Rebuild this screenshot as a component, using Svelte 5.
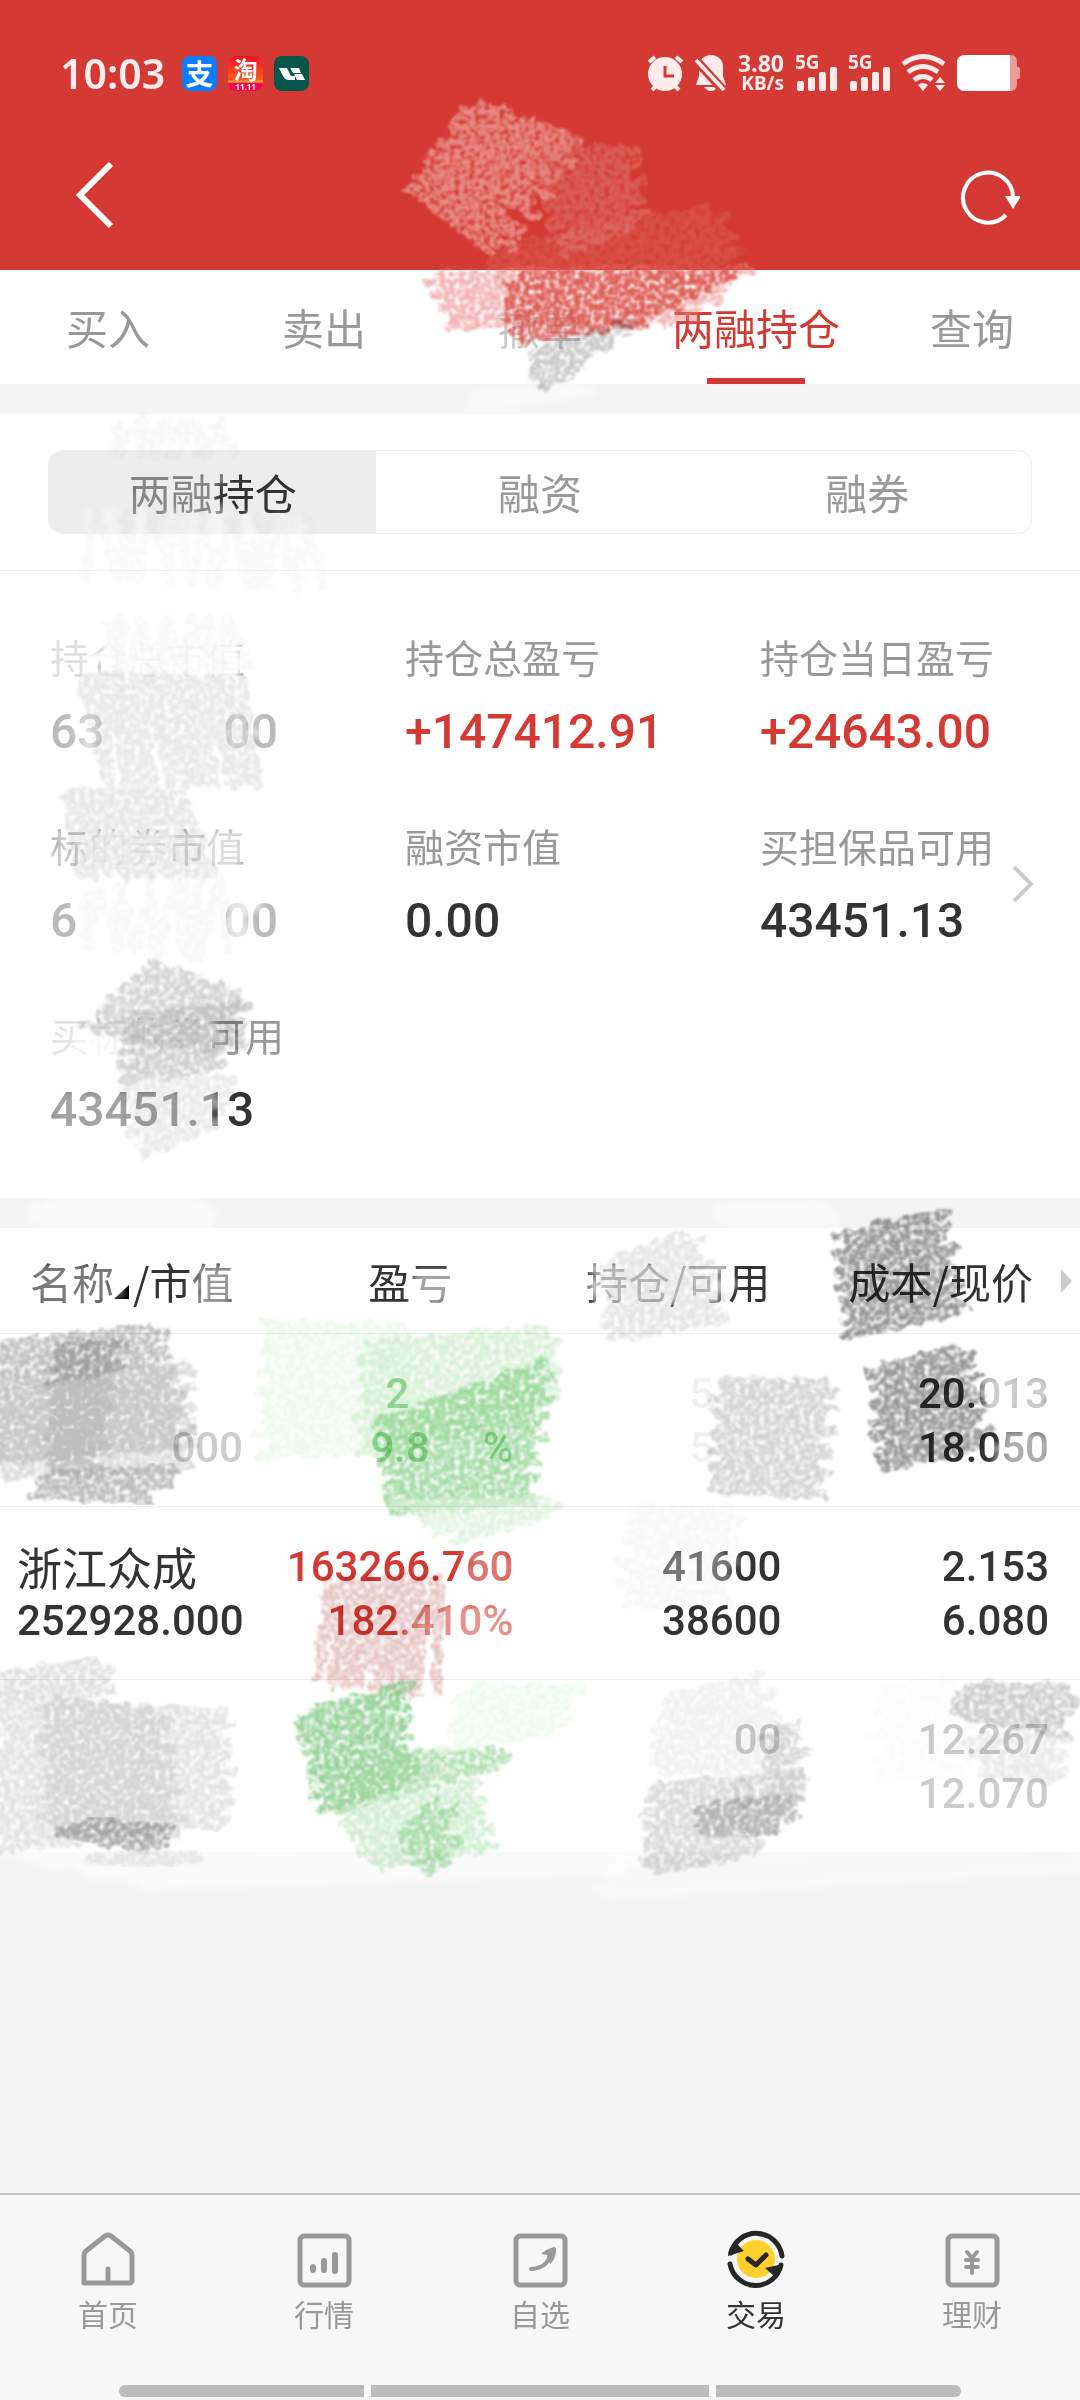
<script lang="ts">
	type Point = [number, number];

	interface Stroke {
		at: [Point, Point, Point, Point];
		rows: number;
		color: string;
		opacity: number;
	}

	interface Line {
		parts: string[];
		tone?: 'up' | 'down' | 'faint' | 'ghost' | 'name';
		span?: number;
	}

	const tabs = ['买入', '卖出', '撤单', '两融持仓', '查询'];
	const segments = ['两融持仓', '融资', '融券'];
	const nav = ['首页', '行情', '自选', '交易', '理财'];

	let activeTab = $state('两融持仓');
	let activeSegment = $state('两融持仓');

	const stats = [
		{ label: '持仓总市值', parts: ['63', '00'], tone: 'worn' },
		{ label: '持仓总盈亏', parts: ['+147412.91'], tone: 'up' },
		{ label: '持仓当日盈亏', parts: ['+24643.00'], tone: 'up' },
		{ label: '标的券市值', parts: ['6', '00'], tone: 'worn' },
		{ label: '融资市值', parts: ['0.00'], tone: '' },
		{ label: '买担保品可用', parts: ['43451.13'], tone: '' },
		{ label: '买标的券可用', parts: ['43451.13'], tone: '' }
	];

	const holdings: Line[][][] = [
		[
			[{ parts: [''] }, { parts: ['', '000'], tone: 'faint', span: 226 }],
			[{ parts: ['2', ''], tone: 'down', span: 128 }, { parts: ['9.8', '%'], tone: 'down', span: 143 }],
			[{ parts: ['5', ''], tone: 'ghost', span: 92 }, { parts: ['5', ''], tone: 'ghost', span: 92 }],
			[{ parts: ['20.013'] }, { parts: ['18.050'] }]
		],
		[
			[{ parts: ['浙江众成'], tone: 'name' }, { parts: ['252928.000'] }],
			[{ parts: ['163266.760'], tone: 'up' }, { parts: ['182.410%'], tone: 'up' }],
			[{ parts: ['41600'] }, { parts: ['38600'] }],
			[{ parts: ['2.153'] }, { parts: ['6.080'] }]
		],
		[
			[{ parts: [''] }, { parts: [''] }],
			[{ parts: [''] }, { parts: [''] }],
			[{ parts: ['00'], tone: 'faint' }, { parts: ['0', ''], tone: 'ghost', span: 50 }],
			[{ parts: ['12.267'], tone: 'faint' }, { parts: ['12.070'], tone: 'faint' }]
		]
	];

	// soft wipes that hide what is below them
	const wipes: Stroke[] = [
		{ at: [[495, 305], [575, 300], [590, 345], [495, 350]], rows: 4, color: '#fff', opacity: 0.5 },
		{ at: [[475, 395], [575, 388], [585, 392], [475, 408]], rows: 3, color: '#fff', opacity: 0.4 },
		{ at: [[130, 478], [215, 478], [215, 520], [130, 520]], rows: 4, color: '#ededed', opacity: 0.45 },
		{ at: [[88, 510], [90, 585], [318, 590], [300, 520]], rows: 14, color: '#fff', opacity: 0.4 },
		{ at: [[45, 640], [95, 640], [95, 675], [45, 675]], rows: 4, color: '#fff', opacity: 0.7 },
		{ at: [[100, 640], [245, 640], [245, 675], [100, 675]], rows: 4, color: '#fff', opacity: 0.95 },
		{ at: [[55, 835], [100, 835], [100, 865], [55, 865]], rows: 3, color: '#fff', opacity: 0.5 },
		{ at: [[90, 835], [165, 835], [165, 865], [90, 865]], rows: 4, color: '#fff', opacity: 0.9 },
		{ at: [[170, 835], [245, 835], [245, 865], [170, 865]], rows: 4, color: '#fff', opacity: 0.65 },
		{ at: [[82, 715], [100, 715], [100, 750], [82, 750]], rows: 4, color: '#fff', opacity: 0.5 },
		{ at: [[225, 715], [250, 715], [250, 750], [225, 750]], rows: 4, color: '#fff', opacity: 0.5 },
		{ at: [[225, 905], [248, 905], [248, 940], [225, 940]], rows: 3, color: '#fff', opacity: 0.65 },
		{ at: [[50, 1022], [90, 1022], [90, 1055], [50, 1055]], rows: 4, color: '#fff', opacity: 0.75 },
		{ at: [[85, 1022], [215, 1022], [215, 1055], [85, 1055]], rows: 4, color: '#fff', opacity: 0.9 },
		{ at: [[50, 1095], [215, 1095], [215, 1132], [50, 1132]], rows: 4, color: '#fff', opacity: 0.55 },
		{ at: [[40, 1204], [205, 1204], [205, 1224], [40, 1224]], rows: 4, color: '#fff', opacity: 0.6 },
		{ at: [[725, 1204], [825, 1204], [830, 1224], [725, 1224]], rows: 4, color: '#fff', opacity: 0.45 },
		{ at: [[35, 1270], [110, 1270], [110, 1300], [35, 1300]], rows: 4, color: '#fff', opacity: 0.35 },
		{ at: [[200, 1270], [235, 1270], [235, 1300], [200, 1300]], rows: 4, color: '#fff', opacity: 0.5 },
		{ at: [[418, 1275], [450, 1275], [450, 1300], [418, 1300]], rows: 4, color: '#fff', opacity: 0.55 },
		{ at: [[595, 1268], [722, 1268], [722, 1300], [595, 1300]], rows: 4, color: '#fff', opacity: 0.7 },
		{ at: [[985, 1380], [1050, 1380], [1050, 1408], [985, 1408]], rows: 4, color: '#fff', opacity: 0.75 },
		{ at: [[1005, 1436], [1050, 1436], [1050, 1462], [1005, 1462]], rows: 4, color: '#fff', opacity: 0.6 },
		{ at: [[470, 1555], [512, 1555], [512, 1580], [470, 1580]], rows: 3, color: '#fff', opacity: 0.3 },
		{ at: [[410, 1610], [512, 1610], [512, 1635], [410, 1635]], rows: 4, color: '#fff', opacity: 0.45 },
		{ at: [[665, 1555], [730, 1555], [725, 1580], [665, 1580]], rows: 4, color: '#fff', opacity: 0.35 },
		{ at: [[0, 1852], [640, 1848], [620, 1868], [150, 1885]], rows: 6, color: '#fff', opacity: 0.6 },
		{ at: [[620, 1856], [1080, 1850], [1080, 1868], [600, 1895]], rows: 6, color: '#fff', opacity: 0.35 }
	];

	// chalk on the red bar, lighter than its ground
	const chalk: Stroke[] = [
		{ at: [[474, 105], [578, 135], [500, 255], [412, 192]], rows: 18, color: '#eea5a1', opacity: 0.75 },
		{ at: [[540, 150], [628, 150], [640, 225], [560, 252]], rows: 12, color: '#e07a75', opacity: 0.6 },
		{ at: [[500, 250], [715, 210], [735, 258], [500, 270]], rows: 7, color: '#e07a75', opacity: 0.35 },
		{ at: [[430, 276], [742, 270], [690, 318], [455, 325]], rows: 8, color: '#e8827d', opacity: 0.6 },
		{ at: [[510, 276], [735, 272], [640, 322], [520, 338]], rows: 9, color: '#d8443d', opacity: 0.75 }
	];

	// pencil that darkens the page
	const pencil: Stroke[] = [
		{ at: [[535, 350], [632, 322], [550, 382], [545, 386]], rows: 8, color: '#c4c4c4', opacity: 0.9 },
		{ at: [[125, 418], [124, 455], [226, 455], [225, 425]], rows: 9, color: '#f4f4f4', opacity: 0.8 },
		{ at: [[90, 510], [95, 575], [322, 592], [300, 520]], rows: 14, color: '#f6f6f6', opacity: 0.7 },
		{ at: [[110, 620], [120, 690], [240, 670], [235, 620]], rows: 10, color: '#f4f4f4', opacity: 0.7 },
		{ at: [[85, 675], [100, 780], [258, 785], [235, 680]], rows: 20, color: '#e2e2e2', opacity: 0.8 },
		{ at: [[66, 792], [80, 875], [215, 875], [172, 790]], rows: 18, color: '#e0e0e0', opacity: 0.8 },
		{ at: [[85, 890], [95, 945], [220, 960], [215, 880]], rows: 9, color: '#f5f5f5', opacity: 0.8 },
		{ at: [[155, 962], [235, 990], [235, 1050], [85, 1030]], rows: 13, color: '#c8c8c8', opacity: 0.8 },
		{ at: [[130, 1020], [235, 1005], [210, 1070], [125, 1080]], rows: 9, color: '#bbb', opacity: 0.7 },
		{ at: [[120, 1085], [225, 1080], [205, 1130], [145, 1155]], rows: 9, color: '#e0e0e0', opacity: 0.7 },
		{ at: [[612, 1260], [692, 1234], [722, 1318], [612, 1338]], rows: 12, color: '#dedede', opacity: 0.8 },
		{ at: [[840, 1238], [938, 1212], [958, 1312], [852, 1336]], rows: 14, color: '#858585', opacity: 0.85 },
		{ at: [[0, 1345], [155, 1328], [185, 1445], [0, 1460]], rows: 16, color: '#aaa', opacity: 0.75 },
		{ at: [[60, 1345], [115, 1345], [92, 1468], [50, 1470]], rows: 16, color: '#999', opacity: 0.8 },
		{ at: [[10, 1400], [185, 1365], [185, 1465], [10, 1475]], rows: 14, color: '#ccc', opacity: 0.7 },
		{ at: [[45, 1475], [180, 1468], [145, 1500], [40, 1494]], rows: 4, color: '#aaa', opacity: 0.8 },
		{ at: [[268, 1325], [405, 1328], [395, 1445], [265, 1455]], rows: 14, color: '#ebf8eb', opacity: 0.9 },
		{ at: [[370, 1345], [548, 1330], [546, 1410], [365, 1455]], rows: 14, color: '#cdeecd', opacity: 0.8 },
		{ at: [[385, 1418], [545, 1362], [525, 1500], [395, 1510]], rows: 18, color: '#90d391', opacity: 0.8 },
		{ at: [[400, 1505], [548, 1500], [545, 1515], [450, 1540]], rows: 4, color: '#d8f2d8', opacity: 0.8 },
		{ at: [[722, 1382], [828, 1384], [818, 1495], [716, 1490]], rows: 14, color: '#ccc', opacity: 0.85 },
		{ at: [[876, 1368], [966, 1348], [982, 1445], [884, 1466]], rows: 14, color: '#858585', opacity: 0.85 },
		{ at: [[632, 1510], [735, 1510], [725, 1602], [625, 1605]], rows: 9, color: '#f5f5f5', opacity: 0.8 },
		{ at: [[328, 1580], [325, 1680], [428, 1695], [430, 1578]], rows: 14, color: '#dfb8b5', opacity: 0.8 },
		{ at: [[0, 1675], [105, 1662], [105, 1690], [0, 1698]], rows: 4, color: '#d8d8d8', opacity: 0.8 },
		{ at: [[0, 1698], [220, 1714], [222, 1820], [0, 1850]], rows: 18, color: '#e2e2e2', opacity: 1 },
		{ at: [[45, 1700], [160, 1712], [175, 1835], [50, 1828]], rows: 14, color: '#d0d0d0', opacity: 0.75 },
		{ at: [[85, 1822], [162, 1828], [158, 1850], [62, 1834]], rows: 4, color: '#999', opacity: 0.8 },
		{ at: [[85, 1860], [190, 1852], [190, 1860], [160, 1865]], rows: 3, color: '#e4e4e4', opacity: 0.8 },
		{ at: [[302, 1714], [400, 1684], [405, 1785], [325, 1808]], rows: 15, color: '#87cb89', opacity: 0.85 },
		{ at: [[390, 1755], [500, 1752], [490, 1765], [330, 1810]], rows: 5, color: '#a0d8a1', opacity: 0.8 },
		{ at: [[345, 1815], [470, 1785], [485, 1850], [380, 1865]], rows: 12, color: '#bde6be', opacity: 0.7 },
		{ at: [[405, 1830], [448, 1800], [448, 1858], [425, 1870]], rows: 6, color: '#94d495', opacity: 0.7 },
		{ at: [[466, 1688], [572, 1690], [555, 1730], [450, 1750]], rows: 6, color: '#ecf9ec', opacity: 0.9 },
		{ at: [[670, 1700], [760, 1676], [790, 1770], [655, 1770]], rows: 11, color: '#eaeaea', opacity: 0.7 },
		{ at: [[768, 1728], [800, 1726], [798, 1800], [770, 1800]], rows: 6, color: '#c8c8c8', opacity: 0.7 },
		{ at: [[654, 1785], [795, 1778], [750, 1855], [650, 1868]], rows: 12, color: '#ccc', opacity: 0.75 },
		{ at: [[705, 1805], [795, 1798], [782, 1830], [705, 1832]], rows: 5, color: '#a4a4a4', opacity: 0.7 },
		{ at: [[880, 1690], [960, 1680], [970, 1770], [880, 1780]], rows: 8, color: '#fafafa', opacity: 0.8 },
		{ at: [[968, 1686], [1070, 1688], [1060, 1735], [960, 1715]], rows: 7, color: '#bbb', opacity: 0.75 },
		{ at: [[970, 1735], [1060, 1740], [1055, 1780], [985, 1775]], rows: 6, color: '#e0e0e0', opacity: 0.7 }
	];

	// back and forth between the left edge (0 to 3) and the right edge (1 to 2)
	function hatch({ at, rows }: Stroke) {
		const [a, b, c, d] = at;
		const points: string[] = [];
		for (let i = 0; i <= rows; i++) {
			const t = i / rows;
			const left = Math.sin(i * 2.7 + a[0]) * 8;
			const right = Math.cos(i * 3.9 + b[1]) * 10;
			points.push(`${a[0] + (d[0] - a[0]) * t + left} ${a[1] + (d[1] - a[1]) * t}`);
			points.push(`${b[0] + (c[0] - b[0]) * t + right} ${b[1] + (c[1] - b[1]) * t}`);
		}
		return 'M' + points.join('L');
	}
</script>

{#snippet scribble(name: string, strokes: Stroke[], filter: string)}
	<svg class="scribble {name}" viewBox="0 0 1080 2400" aria-hidden="true">
		{#each strokes as stroke}
			<path
				d={hatch(stroke)}
				fill="none"
				stroke={stroke.color}
				stroke-width="10"
				stroke-linejoin="round"
				opacity={stroke.opacity}
				filter="url(#{filter})"
			/>
		{/each}
	</svg>
{/snippet}

{#snippet signal()}
	<svg width="42" height="36" viewBox="0 0 42 36">
		<text x="0" y="14" class="net">5G</text>
		<rect x="2" y="26" width="7" height="10" rx="2" />
		<rect x="13" y="22" width="7" height="14" rx="2" />
		<rect x="24" y="17" width="7" height="19" rx="2" />
		<rect x="35" y="12" width="7" height="24" rx="2" />
	</svg>
{/snippet}

<svg class="defs" width="0" height="0" aria-hidden="true">
	<filter id="grain" x="-10%" y="-15%" width="120%" height="130%" color-interpolation-filters="sRGB">
		<feTurbulence type="fractalNoise" baseFrequency="0.08" numOctaves="3" seed="9" result="wave" />
		<feTurbulence type="fractalNoise" baseFrequency="0.2" numOctaves="4" seed="4" result="noise" />
		<feDisplacementMap in="SourceGraphic" in2="wave" scale="14" xChannelSelector="R" yChannelSelector="G" result="rough" />
		<feColorMatrix in="noise" values="0 0 0 0 0  0 0 0 0 0  0 0 0 0 0  3 0 0 0 -0.75" result="paper" />
		<feComposite in="rough" in2="paper" operator="in" />
		<feGaussianBlur stdDeviation="0.8" />
	</filter>
	<filter id="soft" x="-20%" y="-40%" width="140%" height="180%">
		<feGaussianBlur stdDeviation="3" />
	</filter>
</svg>

<div class="app">
	<header class="top">
		<div class="status">
			<span class="time">10:03</span>
			<span class="badge alipay">支</span>
			<span class="badge taobao"><b>淘</b><i>11.11</i></span>
			<span class="badge li">
				<svg width="35" height="35" viewBox="0 0 35 35">
					<path d="M5 12h8l4 8h4v4h-6q-4 0-6-4zM16 12h9l2 5h-8zM20 18h8l3 6h-8z" fill="#fff" />
				</svg>
			</span>
			<div class="system">
				<svg width="37" height="36" viewBox="0 0 37 36">
					<path d="M2 7l6-5M35 7l-6-5M5 35l5-5M32 35l-5-5" stroke="#ffeceb" stroke-width="4" />
					<circle cx="18" cy="19" r="17" />
					<path d="M18 11v10h9" fill="none" stroke="#d43a33" stroke-width="3" />
				</svg>
				<svg width="32" height="36" viewBox="0 0 32 36">
					<path d="M16 0c7 0 12 5 12 11v10l3 9H1l3-9V11C4 5 9 0 16 0zM9 32h13q-2 4-6 4t-7-4z" />
					<path d="M-1 3l31 34" stroke="#d43a33" stroke-width="9" />
					<path d="M1 5l28 30" stroke="#ffeceb" stroke-width="4" />
				</svg>
				<div class="speed">
					<span>3.80</span>
					<small>KB/s</small>
				</div>
				{@render signal()}
				{@render signal()}
				<svg width="45" height="36" viewBox="0 0 45 36">
					<path d="M2 9Q22-6 43 9M7 17Q22 6 37 17M13 25Q22 18 31 25" fill="none" stroke="#ffeceb" stroke-width="5" />
					<path d="M17 30q5-4 10 0l-5 6zM34 28l5-6 5 6zM34 30l5 6 5-6z" />
				</svg>
				<svg width="63" height="36" viewBox="0 0 63 36">
					<path d="M50 0h4q6 0 6 8v4h1q2 0 2 2v8q0 2-2 2h-1v4q0 8-6 8h-4z" fill="#eb9c99" />
					<path d="M8 0h45v36H8q-8 0-8-8V8q0-8 8-8z" fill="#fff" />
				</svg>
			</div>
		</div>
		<div class="toolbar">
			<button aria-label="返回">
				<svg width="40" height="66" viewBox="0 0 40 66">
					<path d="M36 2L5 33l31 31" fill="none" stroke="#fff" stroke-width="6" />
				</svg>
			</button>
			<button aria-label="刷新">
				<svg width="60" height="60" viewBox="0 0 60 60">
					<path d="M46 50A25 25 0 1 1 53 32" fill="none" stroke="#fff" stroke-width="4" />
					<path d="M45 31h16l-8 13z" fill="#fff" />
				</svg>
			</button>
		</div>
	</header>

	<nav class="tabs">
		{#each tabs as tab}
			<button class:active={tab === activeTab} onclick={() => (activeTab = tab)}>{tab}</button>
		{/each}
	</nav>

	<section class="panel">
		<div class="switch">
			<div class="segments">
				{#each segments as segment}
					<button class:active={segment === activeSegment} onclick={() => (activeSegment = segment)}>
						{segment}
					</button>
				{/each}
			</div>
		</div>
		<dl class="stats">
			{#each stats as { label, parts, tone }}
				<div class="stat">
					<dt>{label}</dt>
					<dd class={tone}>
						{#each parts as part}<span>{part}</span>{/each}
					</dd>
				</div>
			{/each}
			<svg class="more" width="22" height="38" viewBox="0 0 22 38">
				<path d="M2 2l17 17L2 36" fill="none" stroke="#ccc" stroke-width="4" />
			</svg>
		</dl>
	</section>

	<section class="panel">
		<table>
			<thead>
				<tr>
					<th>名称<svg class="sort" width="15" height="14" viewBox="0 0 15 14"><path d="M15 0v14H0z" /></svg>/市值</th>
					<th>盈亏</th>
					<th>持仓/可用</th>
					<th>
						<div class="last">
							成本/现价
							<svg width="11" height="24" viewBox="0 0 11 24"><path d="M0 0l11 12L0 24z" fill="#ccc" /></svg>
						</div>
					</th>
				</tr>
			</thead>
			<tbody>
				{#each holdings as row}
					<tr>
						{#each row as cell}
							<td>
								{#each cell as line}
									<div class="line">
										<span class="value {line.tone}" style={line.span ? `width: ${line.span}px` : undefined}>
											{#each line.parts as part}<span>{part}</span>{/each}
										</span>
									</div>
								{/each}
							</td>
						{/each}
					</tr>
				{/each}
			</tbody>
		</table>
	</section>

	<footer>
		<nav class="bottom">
			{#each nav as item, i}
				<a href="#{i}" class:active={item === '交易'}>
					<svg width="58" height="58" viewBox="0 0 58 58" fill="none" stroke="#999" stroke-width="5" stroke-linecap="round" stroke-linejoin="round">
						{#if i === 0}
							<path d="M5 53V25q0-2 2-4L26 6q3-2 6 0l19 15q2 2 2 4v25q0 3-3 3H8q-3 0-3-3zM29 53V39" />
						{:else if i === 3}
							<circle cx="29" cy="29" r="19" fill="#ffd02b" stroke="none" />
							<g stroke="#262626">
								<path d="M4 23a26 26 0 0 1 51 3M54 35a26 26 0 0 1-51-1" />
								<path d="M21 29l8 6 10-10" />
							</g>
							<path d="M1 26q0-8 7-14l9 9zM56 34q-2 9-9 12l-9-8z" fill="#262626" stroke="none" />
						{:else}
							<rect x="5" y="6" width="49" height="49" rx="4" />
							{#if i === 1}
								<path d="M18 37v3M29 31v9M40 25v16" stroke-width="6" />
							{:else if i === 2}
								<path d="M20 39q17-1 19-15" stroke-width="4" />
								<path d="M43 17q2 0 2 3 0 9-6 14l-3-9-6-1q5-5 13-7z" fill="#999" stroke="none" />
							{:else}
								<path d="M24 22l5 6 5-6M23 30h12M23 37h12M29 28v15" stroke-width="4" />
							{/if}
						{/if}
					</svg>
					<span>{item}</span>
				</a>
			{/each}
		</nav>
		<div class="home-bar"><i></i><i></i><i></i></div>
	</footer>

	{@render scribble('wipe', wipes, 'soft')}
	{@render scribble('chalk', chalk, 'grain')}
	{@render scribble('pencil', pencil, 'grain')}
</div>

<style>
	:global(body) {
		margin: 0;
		background: #f4f4f4;
	}

	.app {
		position: relative;
		display: flex;
		flex-direction: column;
		min-height: 100vh;
		overflow: hidden;
		color: #333;
		font-family: 'Noto Sans CJK SC', sans-serif;
	}

	.defs {
		position: absolute;
	}

	.scribble {
		position: absolute;
		top: 0;
		left: 0;
		width: 100%;
		pointer-events: none;
	}

	.pencil {
		mix-blend-mode: multiply;
	}

	button {
		padding: 0;
		border: 0;
		background: none;
		color: inherit;
		font: inherit;
	}

	.top {
		background: #d43a33;
	}

	.status {
		display: flex;
		align-items: center;
		box-sizing: border-box;
		height: 120px;
		padding: 26px 60px 0;
		gap: 11px;
		color: #ffeceb;
	}

	.time {
		margin-right: 6px;
		font: 600 41px 'Noto Sans', sans-serif;
	}

	.badge {
		display: flex;
		flex-direction: column;
		align-items: center;
		justify-content: center;
		width: 35px;
		height: 35px;
		border-radius: 8px;
		color: #fff;
	}

	.alipay {
		background: #0a7cff;
		font-size: 28px;
		font-weight: 700;
		line-height: 35px;
	}

	.taobao {
		background: linear-gradient(#f01228 0, #ff5a1c 68%, #f8b13c 74%, #f5064a 78%);
	}

	.taobao b {
		font-size: 24px;
		line-height: 26px;
	}

	.taobao i {
		font: 700 8px/9px 'Noto Sans', sans-serif;
	}

	.li {
		background: #07564c;
	}

	.system {
		display: flex;
		align-items: center;
		margin-left: auto;
		gap: 11px;
		fill: #ffeceb;
	}

	.system svg {
		overflow: visible;
	}

	.speed {
		display: flex;
		flex-direction: column;
		align-items: flex-end;
		font: 700 23px/20px 'Noto Sans', sans-serif;
	}

	.speed small {
		font-size: 19px;
	}

	.net {
		font: 700 19px 'Noto Sans', sans-serif;
	}

	.toolbar {
		display: flex;
		align-items: center;
		justify-content: space-between;
		height: 150px;
		padding: 0 60px 0 75px;
	}

	.toolbar button {
		display: flex;
	}

	.tabs {
		display: flex;
		height: 114px;
		background: #fff;
	}

	.tabs button {
		position: relative;
		flex: 1;
		padding-bottom: 2px;
		color: #999;
		font-size: 42px;
	}

	.tabs .active {
		color: #d43a33;
	}

	.tabs .active::after {
		content: '';
		position: absolute;
		bottom: 0;
		left: 50%;
		width: 98px;
		height: 6px;
		margin-left: -49px;
		background: #d43a33;
	}

	.panel {
		margin-top: 30px;
		background: #fff;
	}

	.switch {
		padding: 36px 48px;
		border-bottom: 1px solid #eee;
	}

	.segments {
		display: flex;
		overflow: hidden;
		box-sizing: border-box;
		height: 84px;
		border: 1px solid #eee;
		border-radius: 14px;
	}

	.segments button {
		flex: 1;
		padding-bottom: 2px;
		color: #999;
		font-size: 42px;
	}

	.segments .active {
		background: #ededed;
		color: #333;
	}

	.stats {
		position: relative;
		display: grid;
		grid-template-columns: repeat(3, 1fr);
		gap: 37px 35px;
		margin: 0;
		padding: 55px 0 42px 50px;
	}

	.stat {
		min-width: 0;
	}

	.stat dt {
		color: #999;
		font-size: 39px;
		line-height: 60px;
		white-space: nowrap;
	}

	.stat dd {
		display: flex;
		justify-content: space-between;
		width: 228px;
		margin: 0;
		font: 500 48px/92px Roboto, sans-serif;
	}

	.stat .worn {
		color: #bbb;
	}

	.stat .up,
	.up {
		color: #d43a33;
	}

	.more {
		position: absolute;
		top: 294px;
		right: 46px;
	}

	table {
		width: 100%;
		border-collapse: collapse;
		table-layout: fixed;
	}

	th {
		height: 105px;
		padding: 0;
		border-bottom: 1px solid #eee;
		font-size: 42px;
		font-weight: 400;
		line-height: 60px;
		text-align: right;
		white-space: nowrap;
	}

	th:nth-child(1) {
		width: 24%;
		padding-left: 30px;
		box-sizing: border-box;
		text-align: left;
	}

	th:nth-child(2) {
		width: 24%;
		padding-right: 66px;
		box-sizing: border-box;
	}

	th:nth-child(3) {
		width: 25%;
		padding-right: 18px;
		box-sizing: border-box;
	}

	.sort {
		margin-right: 4px;
	}

	.last {
		display: flex;
		align-items: center;
		justify-content: flex-end;
		gap: 28px;
		padding-right: 8px;
	}

	td {
		padding: 33px 5px 31px 0;
		border-bottom: 1px solid #eee;
		text-align: right;
	}

	tr:last-child td {
		border-bottom: 0;
	}

	td:first-child {
		padding-left: 17px;
		text-align: left;
	}

	td:nth-child(3) {
		padding-right: 7px;
	}

	td:nth-child(4) {
		padding-right: 31px;
	}

	.line {
		height: 54px;
		font: 500 42px/54px Roboto, sans-serif;
		white-space: nowrap;
	}

	.value {
		display: inline-flex;
		justify-content: space-between;
	}

	.name {
		font: 400 45px/54px 'Noto Sans CJK SC', sans-serif;
	}

	.down {
		color: #a5dda6;
	}

	.faint {
		color: #ccc;
	}

	.ghost {
		color: #f0f0f0;
	}

	footer {
		margin-top: auto;
		border-top: 2px solid #c4c4c4;
		background: #f7f7f7;
	}

	.bottom {
		display: flex;
		padding-top: 35px;
	}

	.bottom a {
		display: flex;
		flex: 1;
		flex-direction: column;
		align-items: center;
		color: #999;
		font-size: 30px;
		line-height: 50px;
		text-decoration: none;
	}

	.bottom .active {
		color: #333;
	}

	.home-bar {
		display: flex;
		gap: 7px;
		padding: 47px 11% 3px;
	}

	.home-bar i {
		flex: 245;
		height: 12px;
		background: #bbb;
	}

	.home-bar i:nth-child(2) {
		flex: 338;
	}

	.home-bar i:first-child {
		border-radius: 6px 0 0 6px;
	}

	.home-bar i:last-child {
		border-radius: 0 6px 6px 0;
	}
</style>
